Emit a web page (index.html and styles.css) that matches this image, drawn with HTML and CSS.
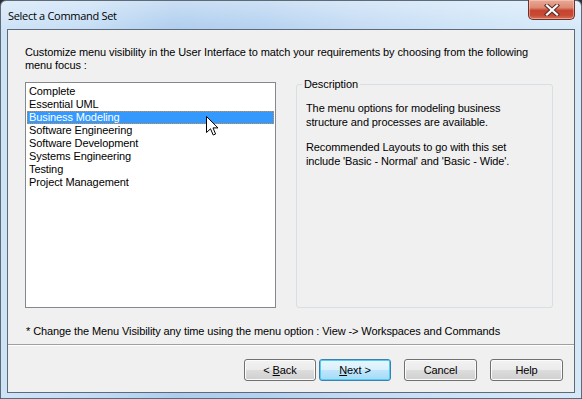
FILE: index.html
```html
<!DOCTYPE html>
<html>

<head>
  <meta charset="UTF-8">
  <title>Select a Command Set</title>
  <link rel="stylesheet" href="styles.css">
</head>

<body>
  <div class="window">
    <div class="titlebar">
      <span class="title">Select a Command Set</span>
      <div class="close">
        <svg width="16" height="12" viewBox="0 0 16 12">
          <path d="M3 1.5 L13 10.5 M13 1.5 L3 10.5" stroke="#5b2c27" stroke-width="4.2" stroke-linecap="square" />
          <path d="M3 1.5 L13 10.5 M13 1.5 L3 10.5" stroke="#fff" stroke-width="2.2" stroke-linecap="square" />
        </svg>
      </div>
    </div>

    <div class="client">
      <div class="page">
        <p class="intro">Customize menu visibility in the User Interface to match your requirements by choosing from the following
          menu focus :</p>

        <div class="row">
          <div class="listbox">
            <div class="item">Complete</div>
            <div class="item">Essential UML</div>
            <div class="item selected">Business Modeling</div>
            <div class="item">Software Engineering</div>
            <div class="item">Software Development</div>
            <div class="item">Systems Engineering</div>
            <div class="item">Testing</div>
            <div class="item">Project Management</div>
            <!-- mouse pointer -->
            <svg class="cursor" width="13" height="20" viewBox="0 0 13 20">
              <path d="M0.5 0.5 L0.5 16.5 L4.5 12.8 L7.2 19 L9.6 18 L7 11.9 L12 11.9 Z" fill="#fff" stroke="#000"
                stroke-width="1" stroke-linejoin="miter" />
            </svg>
          </div>

          <fieldset class="group">
            <legend>Description</legend>
            <p>The menu options for modeling business<br>structure and processes are available.</p>
            <p>Recommended Layouts to go with this set<br>include 'Basic - Normal' and 'Basic - Wide'.</p>
          </fieldset>
        </div>

        <p class="note">* Change the Menu Visibility any time using the menu option : View -&gt; Workspaces and Commands</p>
      </div>

      <div class="buttons">
        <button class="btn narrow">&lt; <u>B</u>ack</button>
        <button class="btn narrow default"><u>N</u>ext &gt;</button>
        <button class="btn gap">Cancel</button>
        <button class="btn gap">Help</button>
      </div>
    </div>
  </div>
</body>

</html>
```

FILE: styles.css
```css
html,
body {
  margin: 0;
  padding: 0;
  background: #2b2f36;
}

body {
  width: 582px;
  height: 399px;
  overflow: hidden;
  font-family: "Liberation Sans", Arial, sans-serif;
  font-size: 11px;
  letter-spacing: -0.1px;
  color: #000;
}

.window {
  box-sizing: border-box;
  width: 582px;
  height: 399px;
  display: flex;
  flex-direction: column;
  border: 1px solid #5d6b78;
  border-radius: 6px 6px 0 0;
  background:
    linear-gradient(180deg, rgba(255, 255, 255, 0.35) 0px, rgba(255, 255, 255, 0) 30px),
    linear-gradient(90deg, #cfe3f7 0%, #c4ddf5 15%, #aecdee 30%, #b3d1f0 45%, #c2daf4 60%, #cde3f7 80%, #d6e9f9 100%);
}

/* title bar */

.titlebar {
  height: 28px;
  display: flex;
  justify-content: space-between;
  align-items: flex-start;
  padding: 0 6px 0 7px;
}

.title {
  font-family: "Open Sans", sans-serif;
  font-size: 11px;
  line-height: 29px;
  color: #000;
  letter-spacing: -0.3px;
}

.close {
  width: 45px;
  height: 19px;
  margin-top: -1px;
  border: 1px solid #6e3029;
  border-top: none;
  border-radius: 0 0 5px 5px;
  background: linear-gradient(180deg, #e9a996 0%, #dd8a74 40%, #c8442f 55%, #c64a35 80%, #d7735c 100%);
  box-shadow: inset 0 0 0 1px rgba(255, 220, 210, 0.45);
  display: flex;
  align-items: center;
  justify-content: center;
}

/* client area */

.client {
  flex: 1;
  margin: 0 6px 5px 6px;
  border: 1px solid #5e6a77;
  background: #f0f0f0;
  display: flex;
  flex-direction: column;
}

.page {
  height: 314px;
  padding: 16px 17px 0;
  box-sizing: border-box;
}

.intro {
  margin: 0;
  line-height: 13px;
  width: 520px;
}

.row {
  display: flex;
  align-items: flex-start;
  margin-top: 10px;
}

.listbox {
  position: relative;
  box-sizing: border-box;
  width: 251px;
  height: 226px;
  border: 1px solid #828790;
  background: #fff;
  padding: 2px 1px 1px;
}

.item {
  height: 13px;
  line-height: 13px;
  padding-left: 2px;
  white-space: nowrap;
}

.selected {
  background: #3399ff;
  color: #fff;
  outline: 1px dotted #e58a2b;
  outline-offset: -1px;
}

.cursor {
  position: absolute;
  left: 180px;
  top: 33px;
}

.group {
  box-sizing: border-box;
  width: 257px;
  height: 230px;
  margin: -4px 0 0 20px;
  padding: 10px 9px 0;
  border: 1px solid #d5dfe5;
  border-radius: 3px;
}

.group legend {
  padding: 0 2px;
  margin-left: -4px;
  line-height: 13px;
}

.group p {
  margin: 0 0 11px;
  line-height: 14px;
}

.note {
  margin: 17px 0 0 1px;
  line-height: 13px;
  white-space: nowrap;
}

/* buttons */

.buttons {
  flex: 1;
  display: flex;
  justify-content: flex-end;
  align-items: flex-start;
  gap: 3px;
  padding: 14px 11px 0 0;
  border-top: 1px solid #a0a0a0;
  box-shadow: inset 0 1px #fff;
}

.btn {
  box-sizing: border-box;
  width: 73px;
  height: 22px;
  padding: 0;
  font-family: "Liberation Sans", Arial, sans-serif;
  font-size: 11px;
  letter-spacing: -0.1px;
  color: #000;
  border: 1px solid #707070;
  border-radius: 3px;
  background: linear-gradient(180deg, #f2f2f2 0%, #ebebeb 49%, #dddddd 50%, #cfcfcf 100%);
  box-shadow: inset 0 0 0 1px #fcfcfc;
}

.btn.narrow {
  width: 72px;
}

.btn.default {
  border-color: #3c7fb1;
  background: linear-gradient(180deg, #eaf6fd 0%, #d9f0fc 49%, #bee6fd 50%, #a7d9f5 100%);
  box-shadow: inset 0 0 0 1px #48d0f8;
}

.btn.gap {
  margin-left: 10px;
}
```
